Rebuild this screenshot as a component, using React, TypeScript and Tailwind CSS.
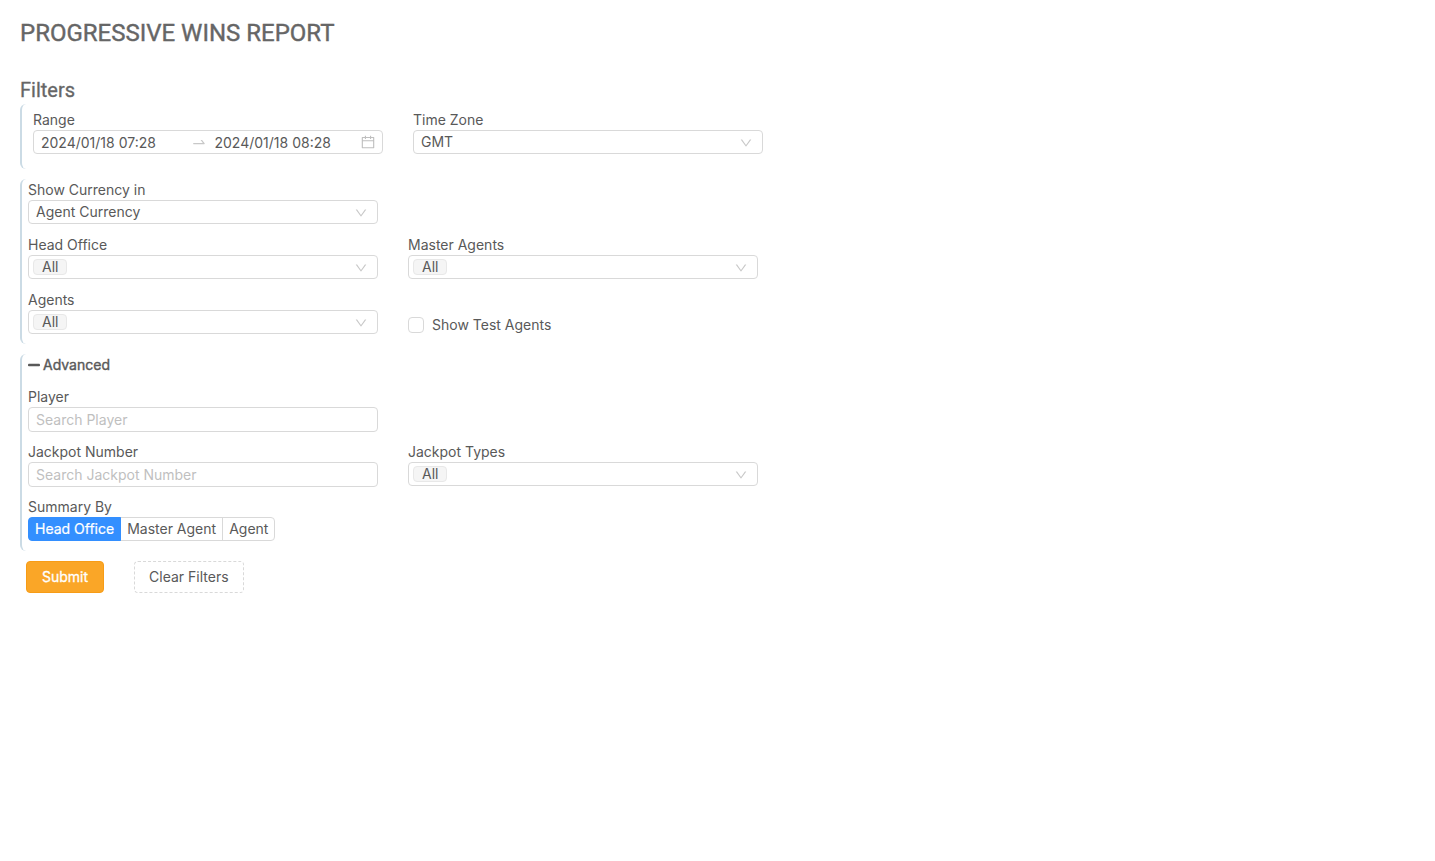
import { useState, type ReactNode } from 'react';
import { AiOutlineCalendar, AiOutlineDown, AiOutlineSwapRight } from 'react-icons/ai';
import { FaMinus, FaPlus } from 'react-icons/fa';

const SUMMARY_OPTIONS = ['Head Office', 'Master Agent', 'Agent'];

function Section({ children, className = '' }: { children: ReactNode; className?: string }) {
  return (
    <section className={`mb-2.5 rounded-md border-l-2 border-[#cbdbe5] pl-1.5 ${className}`}>{children}</section>
  );
}

function FieldRow({ children }: { children: ReactNode }) {
  return <div className="flex min-h-[55px] flex-wrap gap-x-[30px]">{children}</div>;
}

function Field({ id, label, children }: { id: string; label: string; children: ReactNode }) {
  return (
    <div className="w-full max-w-[350px]">
      <label htmlFor={id} className="block leading-[21px]">
        {label}
      </label>
      {children}
    </div>
  );
}

function SelectField({ id, label, value }: { id: string; label: string; value: string }) {
  return (
    <Field id={id} label={label}>
      <div className="relative">
        <select
          id={id}
          defaultValue={value}
          className="block h-6 w-full appearance-none rounded border border-[#d9d9d9] bg-white px-[7px] leading-[22px]"
        >
          <option>{value}</option>
        </select>
        <AiOutlineDown className="pointer-events-none absolute top-1.5 right-2.5 size-3.5 text-[#c8c8c8]" />
      </div>
    </Field>
  );
}

function TagSelectField({ id, label }: { id: string; label: string }) {
  return (
    <Field id={id} label={label}>
      <div className="relative">
        <span className="pointer-events-none absolute top-1 left-[5px] h-4 w-[34px] rounded border border-[#e8e8e8] bg-[#f5f5f5]" />
        <select
          id={id}
          defaultValue="All"
          className="relative block h-6 w-full appearance-none rounded border border-[#d9d9d9] bg-transparent px-[13px] leading-[22px]"
        >
          <option>All</option>
        </select>
        <AiOutlineDown className="pointer-events-none absolute top-1.5 right-2.5 size-3.5 text-[#c8c8c8]" />
      </div>
    </Field>
  );
}

function TextField({ id, label, placeholder }: { id: string; label: string; placeholder: string }) {
  return (
    <Field id={id} label={label}>
      <input
        id={id}
        type="text"
        placeholder={placeholder}
        className="block h-[25px] w-full rounded border border-[#d9d9d9] bg-white px-[7px] placeholder:text-[#bfbfbf]"
      />
    </Field>
  );
}

export default function App() {
  const [open, setOpen] = useState(true);
  const [summary, setSummary] = useState('Head Office');

  return (
    <main className="px-5 pt-[18px] font-['Inter',sans-serif] text-sm text-[#595959]">
      <h1 className="font-['Roboto',sans-serif] text-2xl leading-[30px] font-normal text-[#666666] [-webkit-text-stroke:0.4px]">
        PROGRESSIVE WINS REPORT
      </h1>
      <h2 className="mt-7 font-['Roboto',sans-serif] text-xl leading-7 font-normal text-[#666666] [-webkit-text-stroke:0.3px]">
        Filters
      </h2>

      <form onSubmit={(event) => event.preventDefault()}>
        <Section className="py-[5px]">
          <div className="pl-[5px]">
            <FieldRow>
              <Field id="range-start" label="Range">
                <div className="flex h-6 items-center rounded border border-[#d9d9d9] pr-1.5 pl-[7px]">
                  <input
                    id="range-start"
                    type="text"
                    defaultValue="2024/01/18 07:28"
                    className="min-w-0 flex-1 pt-0.5 outline-none"
                  />
                  <AiOutlineSwapRight className="mx-2 size-4 shrink-0 text-[#c8c8c8]" />
                  <input
                    type="text"
                    aria-label="Range end"
                    defaultValue="2024/01/18 08:28"
                    className="min-w-0 flex-1 pt-0.5 outline-none"
                  />
                  <AiOutlineCalendar className="ml-1 size-4 shrink-0 text-[#bfbfbf]" />
                </div>
              </Field>
              <SelectField id="time-zone" label="Time Zone" value="GMT" />
            </FieldRow>
          </div>
        </Section>

        <Section>
          <FieldRow>
            <SelectField id="currency" label="Show Currency in" value="Agent Currency" />
          </FieldRow>
          <FieldRow>
            <TagSelectField id="head-office" label="Head Office" />
            <TagSelectField id="master-agents" label="Master Agents" />
          </FieldRow>
          <FieldRow>
            <TagSelectField id="agents" label="Agents" />
            <label className="flex items-center gap-2 self-center pt-4">
              <input
                type="checkbox"
                className="size-4 appearance-none rounded border border-[#d9d9d9] bg-white checked:bg-[#338fff]"
              />
              Show Test Agents
            </label>
          </FieldRow>
        </Section>

        <Section>
          <button
            type="button"
            aria-expanded={open}
            onClick={() => setOpen(!open)}
            className="mb-2.5 flex items-center gap-[3px] leading-[22px]"
          >
            {open ? <FaMinus className="h-3.5 w-3" /> : <FaPlus className="h-3.5 w-3" />}
            <span className="[-webkit-text-stroke:0.4px]">Advanced</span>
          </button>
          {open && (
            <>
              <FieldRow>
                <TextField id="player" label="Player" placeholder="Search Player" />
              </FieldRow>
              <FieldRow>
                <TextField id="jackpot-number" label="Jackpot Number" placeholder="Search Jackpot Number" />
                <TagSelectField id="jackpot-types" label="Jackpot Types" />
              </FieldRow>
              <fieldset className="min-h-[55px]">
                <legend className="leading-[21px]">Summary By</legend>
                <div className="flex">
                  {SUMMARY_OPTIONS.map((option) => (
                    <label
                      key={option}
                      className="-ml-px flex h-6 cursor-pointer items-center border border-[#d9d9d9] px-1.5 first:ml-0 first:rounded-l last:rounded-r has-checked:z-10 has-checked:border-[#338fff] has-checked:bg-[#338fff] has-checked:text-white has-checked:[-webkit-text-stroke:0.2px]"
                    >
                      <input
                        type="radio"
                        name="summary"
                        className="sr-only"
                        checked={summary === option}
                        onChange={() => setSummary(option)}
                      />
                      {option}
                    </label>
                  ))}
                </div>
              </fieldset>
            </>
          )}
        </Section>

        <div className="flex gap-[30px] pl-1.5">
          <button
            type="submit"
            className="h-8 rounded border border-[#f79c16] bg-[#faa627] px-[15px] text-white [-webkit-text-stroke:0.3px]"
          >
            Submit
          </button>
          <button type="button" className="h-8 rounded border border-dashed border-[#d9d9d9] bg-white px-3.5">
            Clear Filters
          </button>
        </div>
      </form>
    </main>
  );
}
